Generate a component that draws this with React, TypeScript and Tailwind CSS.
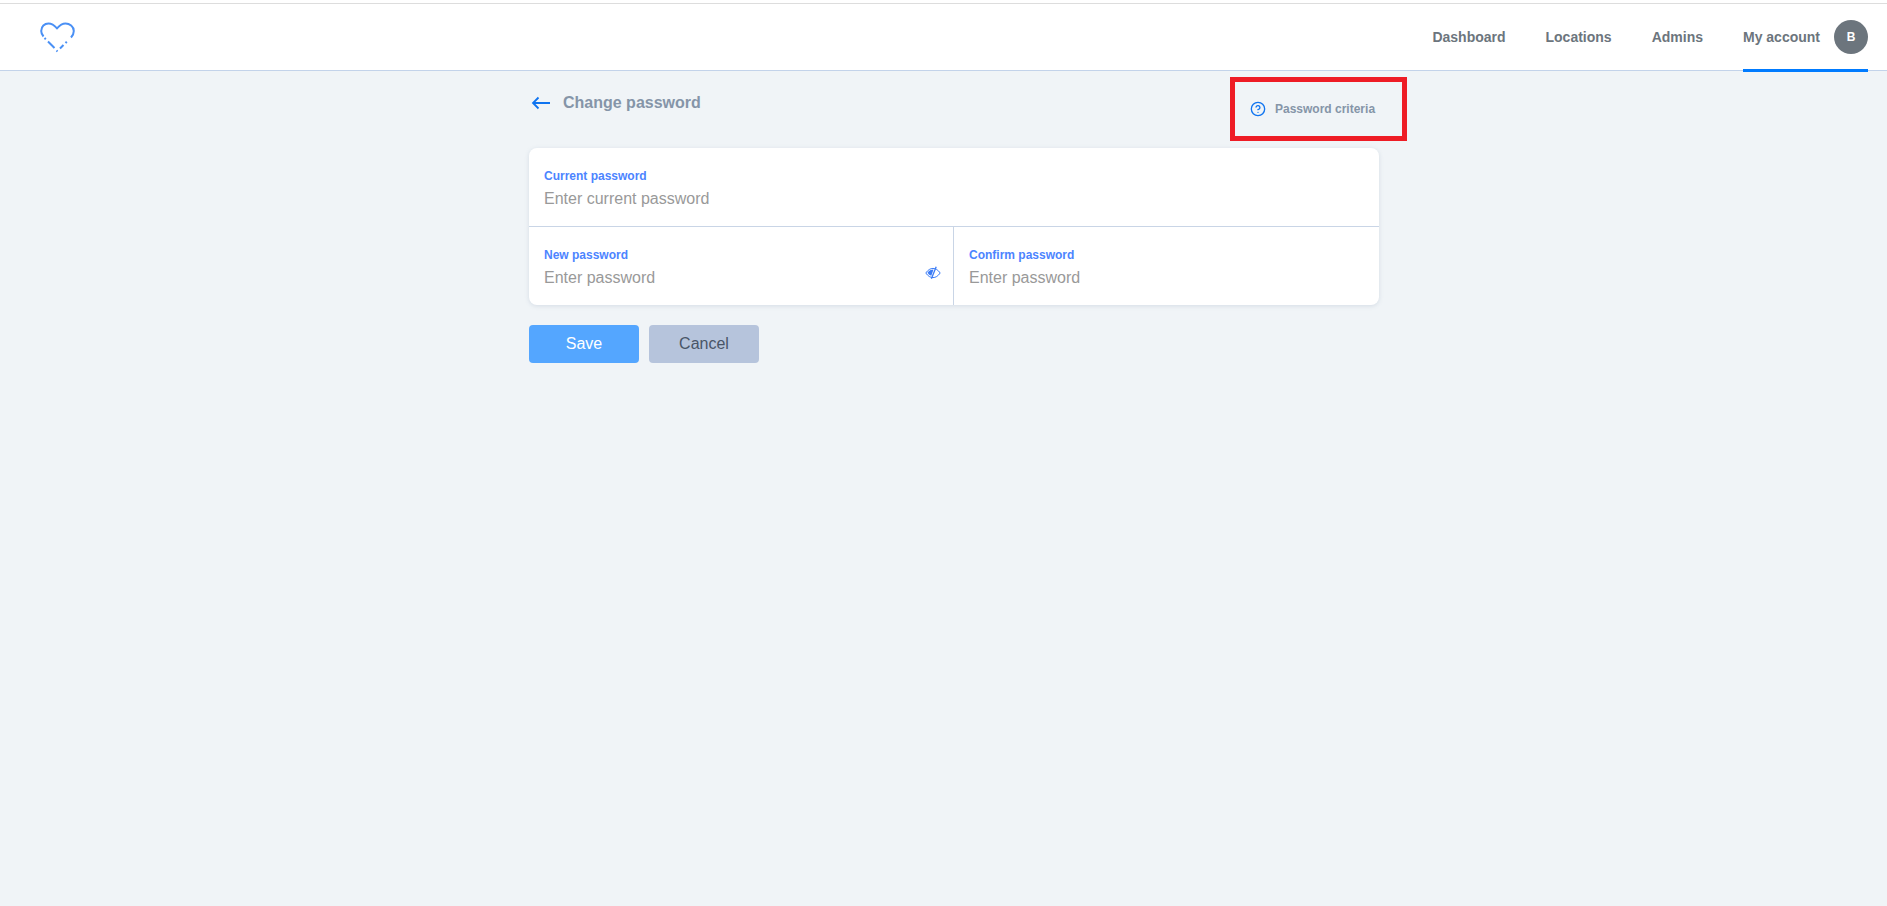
import { CircleHelp } from 'lucide-react';

function HeartLogo() {
  return (
    <svg width="36" height="33" viewBox="0 0 36 33" fill="none" stroke="#4a90f5" strokeWidth="2" className="mt-[3px]">
      <path d="M3.500 14.500 C1.800 12.500 1.200 10.800 1.200 9 C1.200 4.500 4.500 1.500 8.500 1.500 C11.800 1.500 14.500 3.500 17 6.300 C19.500 3.500 22.200 1.500 25.500 1.500 C29.500 1.500 33.800 4.500 33.800 9 C33.800 11.500 32.800 13.500 31 15.500" />
      <path d="M4.500 16 L5.800 17.300 M8 19.500 L14.500 26 M16.500 28.500 L17.500 29.500 M20 26.500 L23.500 23 M25.500 21 L26.800 19.700" />
    </svg>
  );
}

function ArrowLong() {
  return (
    <svg width="20" height="14" viewBox="0 0 20 14" fill="none" stroke="#0f74f0" strokeWidth="1.800">
      <path d="M19 7 H2 M7.500 1.500 L2 7 L7.500 12.500" />
    </svg>
  );
}

function EyeOff() {
  return (
    <svg width="16" height="14" viewBox="0 0 16 14" fill="none" stroke="#3b7cf6" strokeWidth="1">
      <path d="M0.800 7 C3 3.800 5.500 2.400 8 2.400 C10.500 2.400 13 3.800 15.200 7 C13 10.200 10.500 11.600 8 11.600 C5.500 11.600 3 10.200 0.800 7 Z" />
      <path d="M2.500 6.800 C4 4.500 6 3.600 8.500 3.600 L6.300 9.800 C4.800 9.400 3.500 8.300 2.500 6.800 Z" fill="#3b7cf6" stroke="none" />
      <path d="M11.200 0.800 L6.400 12.800" strokeWidth="1.300" />
    </svg>
  );
}

function Field({ label, placeholder, children }: { label: string; placeholder: string; children?: React.ReactNode }) {
  return (
    <label className="relative flex-1 flex flex-col pl-[15px] pr-4 pt-[21px] h-[78px]">
      <span className="text-xs leading-[14px] font-bold text-[#4c84ff]">{label}</span>
      <input
        type="password"
        placeholder={placeholder}
        className="mt-[4px] h-6 w-full text-base outline-none placeholder:text-[#999999] bg-transparent"
      />
      {children}
    </label>
  );
}

export default function App() {
  return (
    <div className="min-h-[906px] bg-[#f0f4f7] font-['Liberation_Sans',Arial,sans-serif]">
      <header className="h-[71px] bg-white pt-[3px]">
        <div className="h-full border-t border-b border-b-[#c3d3ea] border-t-[#dddddd] flex items-center justify-between pl-10 pr-[19px]">
          <HeartLogo />
          <nav className="flex items-center gap-10 h-full text-[14px] font-bold text-[#6c757d]">
            <a>Dashboard</a>
            <a>Locations</a>
            <a>Admins</a>
            <a className="relative flex items-center h-full gap-[14px]">
              My account
              <span className="w-[34px] h-[34px] rounded-full bg-[#6c757d] text-white text-xs flex items-center justify-center">
                B
              </span>
              <span className="absolute left-0 right-0 bottom-[-2px] h-[3px] bg-[#007bff]" />
            </a>
          </nav>
        </div>
      </header>

      <main className="w-[850px] ml-[529px]">
        <div className="flex items-start justify-between h-[77px] -mr-[28px]">
          <div className="flex items-center mt-[20px] h-[24px] ml-[2px]">
            <ArrowLong />
            <h1 className="ml-[12px] text-[16px] font-bold text-[#8595a8]">Change password</h1>
          </div>
          <div className="mt-[6px] w-[177px] h-[64px] border-[5px] border-[#ee1c25] flex items-center pl-[15px]">
            <CircleHelp size={16} className="text-[#0f74f0]" />
            <span className="ml-[9px] text-xs font-bold text-[#8595a8]">Password criteria</span>
          </div>
        </div>

        <section className="bg-white rounded-lg shadow-[0_1px_4px_rgba(130,150,180,0.25)]">
          <div className="border-b border-[#c9d5e6]">
            <Field label="Current password" placeholder="Enter current password" />
          </div>
          <div className="flex">
            <div className="w-[425px] border-r border-[#c9d5e6] flex">
              <Field label="New password" placeholder="Enter password">
                <span className="absolute right-[12px] top-[39px]">
                  <EyeOff />
                </span>
              </Field>
            </div>
            <Field label="Confirm password" placeholder="Enter password" />
          </div>
        </section>

        <div className="flex gap-[10px] mt-5">
          <button className="w-[110px] h-[38px] rounded bg-[#54a6ff] text-white text-base">Save</button>
          <button className="w-[110px] h-[38px] rounded bg-[#b6c4dc] text-[#495567] text-base">Cancel</button>
        </div>
      </main>
    </div>
  );
}
